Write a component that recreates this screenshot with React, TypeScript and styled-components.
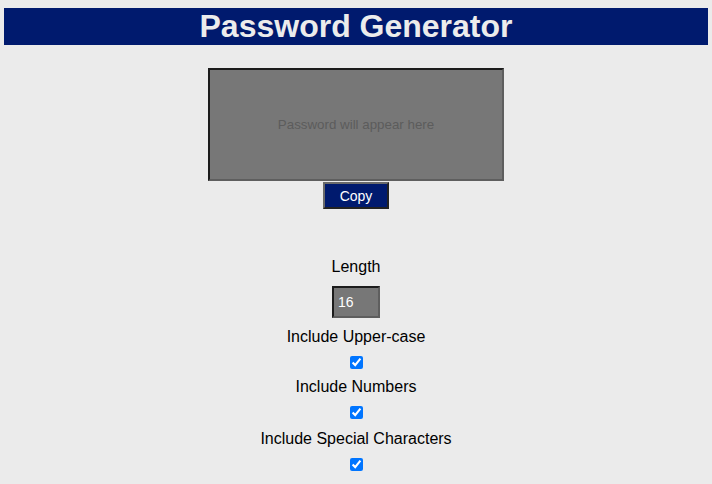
import React, { useState } from "react";
import styled, { createGlobalStyle } from "styled-components";

const GlobalStyle = createGlobalStyle`
  html, body {
    margin: 0;
    padding: 0;
    background-color: #ebebeb;
    font-family: "Liberation Sans", Arial, sans-serif;
  }
`;

const Page = styled.div`
  display: flex;
  flex-direction: column;
  align-items: center;
  padding: 8px 4px;
`;

const TitleBar = styled.h1`
  align-self: stretch;
  margin: 0;
  height: 37px;
  background-color: #001a6e;
  color: #ececec;
  font-size: 32px;
  font-weight: bold;
  line-height: 37px;
  text-align: center;
`;

const OutputBox = styled.textarea`
  box-sizing: border-box;
  width: 296px;
  height: 113px;
  margin: 23px 0 0;
  padding: 0;
  resize: none;
  background-color: #777777;
  border: 2px solid;
  border-color: #1c1c1c #5e5e5e #5e5e5e #1c1c1c;
  color: #fff;
  font-family: "Liberation Sans", Arial, sans-serif;
  font-size: 13.333px;
  line-height: 109px;
  text-align: center;
  outline: none;

  &::placeholder {
    color: #5c5c5c;
  }
`;

const CopyButton = styled.button`
  box-sizing: border-box;
  width: 66px;
  height: 27px;
  margin-top: 1px;
  padding: 0;
  background-color: #001a6e;
  border: 2px solid;
  border-color: #6a6a6a #222 #222 #6a6a6a;
  color: #fff;
  font-family: "Liberation Sans", Arial, sans-serif;
  font-size: 14px;
  cursor: pointer;
`;

const Options = styled.div`
  display: flex;
  flex-direction: column;
  align-items: center;
  margin-top: 48px;
`;

const OptionLabel = styled.label<{ $gapAfter: number }>`
  font-size: 16px;
  line-height: 18px;
  color: #000;
  padding-top: 1px;
  margin-bottom: ${(p) => p.$gapAfter}px;
`;

const LengthInput = styled.input`
  box-sizing: border-box;
  width: 48px;
  height: 32px;
  margin: 0 0 9px;
  padding: 0 4px;
  background-color: #777777;
  border: 2px solid;
  border-color: #1c1c1c #5e5e5e #5e5e5e #1c1c1c;
  color: #fff;
  font-family: "Liberation Sans", Arial, sans-serif;
  font-size: 14px;
  outline: none;
`;

const Check = styled.input<{ $gapAfter?: number }>`
  width: 13px;
  height: 13px;
  margin: 0 0 ${(p) => p.$gapAfter ?? 0}px;
  accent-color: #0075ff;
`;

export default function App() {
  const [length, setLength] = useState("16");
  const [upper, setUpper] = useState(true);
  const [numbers, setNumbers] = useState(true);
  const [special, setSpecial] = useState(true);

  return (
    <>
      <GlobalStyle />
      <Page>
        <TitleBar>Password Generator</TitleBar>
        <OutputBox readOnly placeholder="Password will appear here" />
        <CopyButton>Copy</CopyButton>
        <Options>
          <OptionLabel $gapAfter={10}>Length</OptionLabel>
          <LengthInput
            value={length}
            onChange={(e) => setLength(e.target.value)}
          />
          <OptionLabel $gapAfter={10}>Include Upper-case</OptionLabel>
          <Check
            type="checkbox"
            checked={upper}
            onChange={() => setUpper(!upper)}
            $gapAfter={8}
          />
          <OptionLabel $gapAfter={10}>Include Numbers</OptionLabel>
          <Check
            type="checkbox"
            checked={numbers}
            onChange={() => setNumbers(!numbers)}
            $gapAfter={10}
          />
          <OptionLabel $gapAfter={10}>Include Special Characters</OptionLabel>
          <Check
            type="checkbox"
            checked={special}
            onChange={() => setSpecial(!special)}
          />
        </Options>
      </Page>
    </>
  );
}
